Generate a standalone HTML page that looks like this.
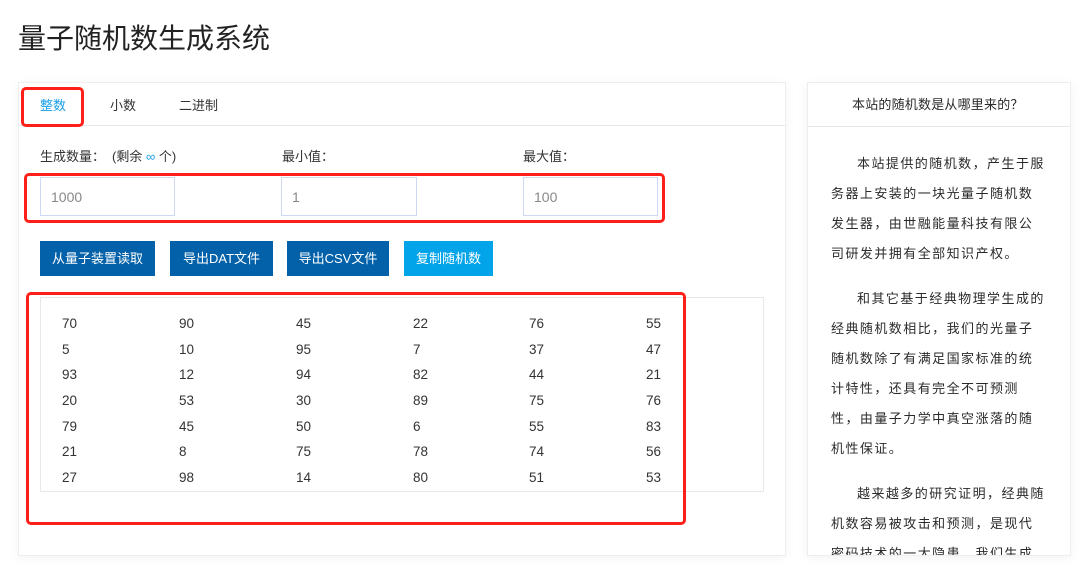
<!DOCTYPE html>
<html lang="zh"><head><meta charset="utf-8"><title>量子随机数生成系统</title>
<style>
html,body{margin:0;padding:0;background:#fff}
body{width:1080px;height:564px;overflow:hidden;position:relative;font-family:"Liberation Sans","Noto Sans CJK SC",sans-serif;color:#333}
.a{position:absolute;white-space:nowrap}
.box{position:absolute;box-sizing:border-box}
.card{border:1px solid #eee;box-shadow:0 2px 10px rgba(0,0,0,.05);background:#fff}
.t{font-size:13px;line-height:18px}
.inp{position:absolute;box-sizing:border-box;top:177px;height:39px;border:1px solid #cfd9f5;font-size:14px;line-height:38px;color:#888;padding-left:10px}
.btn{position:absolute;top:241px;height:35px;background:#0261a9;color:#fff;font-size:13px;line-height:35px;text-align:center}
.red{position:absolute;box-sizing:border-box;border:3px solid #fe2018;border-radius:5px}
.n{position:absolute;font-size:13.5px;line-height:16px;color:#333;white-space:nowrap;margin-top:1px}
.s{position:absolute;left:23px;font-size:13px;line-height:18px;letter-spacing:1.45px;color:#2a2a2a;white-space:nowrap}
</style></head><body>
<div class="a" style="left:18px;top:20px;font-size:28px;line-height:38px;color:#222">量子随机数生成系统</div>

<div class="box card" style="left:18px;top:82px;width:768px;height:474px"></div>
<div class="box" style="left:19px;top:125px;width:766px;height:1px;background:#e8e8e8"></div>
<div class="a t" style="left:40px;top:97px;color:#1a9fe8">整数</div>
<div class="a t" style="left:110px;top:97px">小数</div>
<div class="a t" style="left:179px;top:97px">二进制</div>

<div class="a t" style="left:40px;top:148px">生成数量：</div>
<div class="a" style="left:112px;top:148px;font-size:13px;line-height:18px">(剩余 <span style="color:#1a9fe8">∞</span> 个)</div>
<div class="a t" style="left:282px;top:148px">最小值：</div>
<div class="a t" style="left:523px;top:148px">最大值：</div>

<div class="inp" style="left:40px;width:135px">1000</div>
<div class="inp" style="left:281px;width:136px">1</div>
<div class="inp" style="left:523px;width:135px">100</div>

<div class="btn" style="left:40px;width:115px">从量子装置读取</div>
<div class="btn" style="left:170px;width:103px">导出DAT文件</div>
<div class="btn" style="left:287px;width:102px">导出CSV文件</div>
<div class="btn" style="left:404px;width:89px;background:#02a4e9">复制随机数</div>

<div class="box" style="left:40px;top:297px;width:724px;height:195px;border:1px solid #e8e8e8"></div>

<div class="n" style="left:62px;top:315px">70</div><div class="n" style="left:179px;top:315px">90</div><div class="n" style="left:296px;top:315px">45</div><div class="n" style="left:413px;top:315px">22</div><div class="n" style="left:529px;top:315px">76</div><div class="n" style="left:646px;top:315px">55</div>
<div class="n" style="left:62px;top:341px">5</div><div class="n" style="left:179px;top:341px">10</div><div class="n" style="left:296px;top:341px">95</div><div class="n" style="left:413px;top:341px">7</div><div class="n" style="left:529px;top:341px">37</div><div class="n" style="left:646px;top:341px">47</div>
<div class="n" style="left:62px;top:366px">93</div><div class="n" style="left:179px;top:366px">12</div><div class="n" style="left:296px;top:366px">94</div><div class="n" style="left:413px;top:366px">82</div><div class="n" style="left:529px;top:366px">44</div><div class="n" style="left:646px;top:366px">21</div>
<div class="n" style="left:62px;top:392px">20</div><div class="n" style="left:179px;top:392px">53</div><div class="n" style="left:296px;top:392px">30</div><div class="n" style="left:413px;top:392px">89</div><div class="n" style="left:529px;top:392px">75</div><div class="n" style="left:646px;top:392px">76</div>
<div class="n" style="left:62px;top:418px">79</div><div class="n" style="left:179px;top:418px">45</div><div class="n" style="left:296px;top:418px">50</div><div class="n" style="left:413px;top:418px">6</div><div class="n" style="left:529px;top:418px">55</div><div class="n" style="left:646px;top:418px">83</div>
<div class="n" style="left:62px;top:443px">21</div><div class="n" style="left:179px;top:443px">8</div><div class="n" style="left:296px;top:443px">75</div><div class="n" style="left:413px;top:443px">78</div><div class="n" style="left:529px;top:443px">74</div><div class="n" style="left:646px;top:443px">56</div>
<div class="n" style="left:62px;top:469px">27</div><div class="n" style="left:179px;top:469px">98</div><div class="n" style="left:296px;top:469px">14</div><div class="n" style="left:413px;top:469px">80</div><div class="n" style="left:529px;top:469px">51</div><div class="n" style="left:646px;top:469px">53</div>

<div class="box card" style="left:807px;top:82px;width:264px;height:474px;overflow:hidden">
  <div class="box" style="left:0;top:43px;width:262px;height:1px;background:#e8e8e8"></div>
  <div class="a" style="left:44px;top:13px;font-size:13px;line-height:18px;letter-spacing:.2px;color:#2a2a2a">本站的随机数是从哪里来的？</div>
  <div class="s" style="left:49px;top:72px">本站提供的随机数，产生于服</div>
  <div class="s" style="top:102px">务器上安装的一块光量子随机数</div>
  <div class="s" style="top:132px">发生器，由世融能量科技有限公</div>
  <div class="s" style="top:162px">司研发并拥有全部知识产权。</div>
  <div class="s" style="left:49px;top:207px">和其它基于经典物理学生成的</div>
  <div class="s" style="top:237px">经典随机数相比，我们的光量子</div>
  <div class="s" style="top:267px">随机数除了有满足国家标准的统</div>
  <div class="s" style="top:297px">计特性，还具有完全不可预测</div>
  <div class="s" style="top:327px">性，由量子力学中真空涨落的随</div>
  <div class="s" style="top:357px">机性保证。</div>
  <div class="s" style="left:49px;top:402px">越来越多的研究证明，经典随</div>
  <div class="s" style="top:432px">机数容易被攻击和预测，是现代</div>
  <div class="s" style="top:462px">密码技术的一大隐患，我们生成</div>
</div>

<div class="red" style="left:21px;top:87px;width:63px;height:40px"></div>
<div class="red" style="left:24px;top:173px;width:641px;height:50px"></div>
<div class="red" style="left:26px;top:292px;width:660px;height:233px"></div>
</body></html>
